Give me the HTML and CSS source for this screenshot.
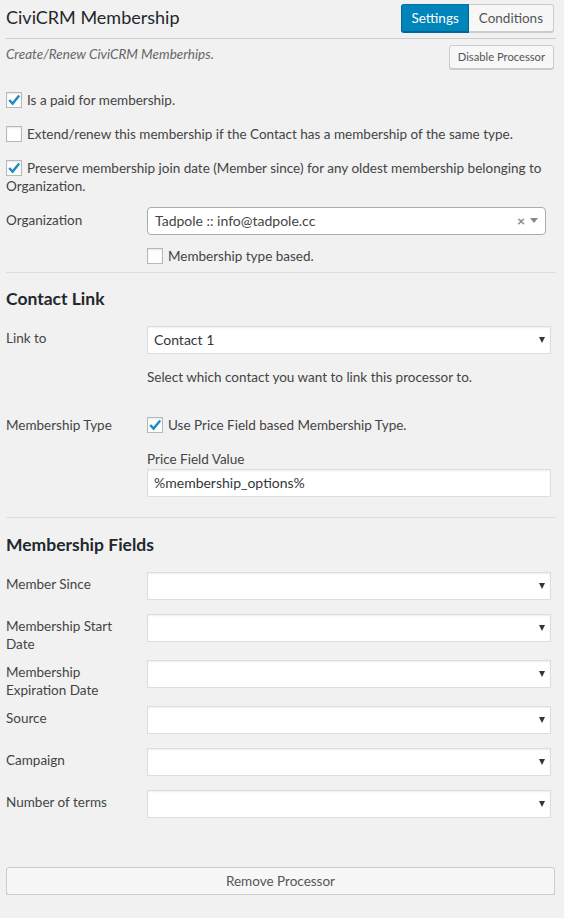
FILE: index.html
```html
<!DOCTYPE html>
<html>
<head>
<meta charset="utf-8">
<link rel="stylesheet" href="styles.css">
</head>
<body>
<div class="panel">
  <div class="head">
    <h2 class="title">CiviCRM Membership</h2>
    <div class="tabs">
      <span class="btn btn-primary">Settings</span><span class="btn">Conditions</span>
    </div>
  </div>
  <div class="descrow">
    <p class="intro">Create/Renew CiviCRM Memberhips.</p>
    <span class="btn btn-small">Disable Processor</span>
  </div>

  <div class="checks">
    <p class="check"><span class="cb"><svg viewBox="0 0 16 16"><polyline points="3.2,8 6.6,11.6 13.2,3.4"/></svg></span>Is a paid for membership.</p>
    <p class="check"><span class="cb"></span>Extend/renew this membership if the Contact has a membership of the same type.</p>
    <p class="check last"><span class="cb"><svg viewBox="0 0 16 16"><polyline points="3.2,8 6.6,11.6 13.2,3.4"/></svg></span>Preserve membership join date (Member since) for any oldest membership belonging to Organization.</p>
  </div>

  <div class="orgrow">
    <label class="orglabel">Organization</label>
    <div class="s2">
      <span class="s2-text">Tadpole :: info@tadpole.cc</span>
      <span class="s2-clear">×</span>
      <span class="s2-arrow"></span>
    </div>
  </div>
  <p class="check sub"><span class="cb"></span>Membership type based.</p>

  <hr class="sep">

  <h3 class="section">Contact Link</h3>
  <div class="field">
    <label class="flabel">Link to</label>
    <div class="fctl">
      <div class="sel"><span class="sel-text">Contact 1</span><span class="sel-arrow"></span></div>
      <p class="desc">Select which contact you want to link this processor to.</p>
    </div>
  </div>
  <div class="field">
    <label class="flabel nopad">Membership Type</label>
    <div class="fctl">
      <p class="check inline"><span class="cb"><svg viewBox="0 0 16 16"><polyline points="3.2,8 6.6,11.6 13.2,3.4"/></svg></span>Use Price Field based Membership Type.</p>
      <label class="toplabel">Price Field Value</label>
      <div class="inp">%membership_options%</div>
    </div>
  </div>

  <hr class="sep sep2">

  <h3 class="section s2h">Membership Fields</h3>
  <div class="field">
    <label class="flabel">Member Since</label>
    <div class="fctl"><div class="sel"><span class="sel-arrow"></span></div></div>
  </div>
  <div class="field">
    <label class="flabel">Membership Start Date</label>
    <div class="fctl"><div class="sel"><span class="sel-arrow"></span></div></div>
  </div>
  <div class="field">
    <label class="flabel">Membership Expiration Date</label>
    <div class="fctl"><div class="sel"><span class="sel-arrow"></span></div></div>
  </div>
  <div class="field">
    <label class="flabel">Source</label>
    <div class="fctl"><div class="sel"><span class="sel-arrow"></span></div></div>
  </div>
  <div class="field">
    <label class="flabel">Campaign</label>
    <div class="fctl"><div class="sel"><span class="sel-arrow"></span></div></div>
  </div>
  <div class="field">
    <label class="flabel">Number of terms</label>
    <div class="fctl"><div class="sel"><span class="sel-arrow"></span></div></div>
  </div>

  <div class="removerow"><span class="btn btn-block">Remove Processor</span></div>
</div>
</body>
</html>
```

FILE: styles.css
```css
html, body {
  margin: 0;
  padding: 0;
  background: #f1f1f1;
}
body {
  font-family: Lato, "Open Sans", sans-serif;
  font-size: 13.5px;
  color: #444;
}
p, h2, h3 { margin: 0; }
.panel {
  padding: 0 8px 0 6px;
}
.head {
  display: flex;
  justify-content: space-between;
  align-items: flex-start;
  box-sizing: border-box;
  height: 39px;
  padding: 4px 2px 0 0;
  border-bottom: 1px solid #ccc;
}
.title {
  font-size: 18px;
  font-weight: 400;
  line-height: 27px;
  color: #23282d;
}
.tabs { display: flex; }
.btn {
  display: inline-block;
  box-sizing: border-box;
  height: 28px;
  line-height: 26px;
  padding: 0 10px;
  font-size: 13.5px;
  color: #555;
  background: #f7f7f7;
  border: 1px solid #ccc;
  box-shadow: 0 1px 0 #ccc;
  border-radius: 3px;
  white-space: nowrap;
}
.tabs .btn { border-radius: 0; }
.tabs .btn:first-child { border-radius: 3px 0 0 3px; }
.tabs .btn:last-child { border-radius: 0 3px 3px 0; border-left: 0; }
.btn-primary {
  padding: 0 9px;
  background: #0085ba;
  border-color: #0073aa #006799 #006799;
  box-shadow: 0 1px 0 #006799;
  color: #fff;
}
.descrow {
  display: flex;
  justify-content: space-between;
  align-items: flex-start;
  padding: 6px 2px 0 0;
}
.intro {
  font-style: italic;
  color: #666;
  line-height: 20px;
  margin-top: -1px;
}
.btn-small {
  height: 24px;
  line-height: 22px;
  padding: 0 8px;
  font-size: 11.2px;
}
.checks { margin-top: 22px; }
.check {
  line-height: 18px;
  margin-bottom: 16px;
}
.check.last { margin-bottom: 12px; }
.cb {
  display: inline-block;
  box-sizing: border-box;
  width: 16px;
  height: 16px;
  margin-right: 5px;
  vertical-align: -3px;
  background: #fff;
  border: 1px solid #b4b9be;
  box-shadow: inset 0 1px 2px rgba(0,0,0,.1);
  position: relative;
}
.cb svg {
  position: absolute;
  left: -1px;
  top: -1px;
  width: 16px;
  height: 16px;
  fill: none;
  stroke: #1e8cbe;
  stroke-width: 2.4;
}
.orgrow {
  display: flex;
  align-items: flex-start;
}
.orglabel {
  width: 141px;
  flex: none;
  padding-top: 4px;
  line-height: 18px;
}
.s2 {
  position: relative;
  box-sizing: border-box;
  width: 399px;
  height: 28px;
  background: #fff;
  border: 1px solid #aaa;
  border-radius: 4px;
}
.s2-text {
  display: block;
  padding-left: 7px;
  line-height: 26px;
  font-size: 14px;
  color: #444;
}
.s2-clear {
  position: absolute;
  right: 20px;
  top: 0;
  line-height: 26px;
  font-size: 14px;
  font-weight: 700;
  color: #888;
}
.s2-arrow {
  position: absolute;
  right: 7px;
  top: 10px;
  width: 0;
  height: 0;
  border-style: solid;
  border-width: 5px 4px 0 4px;
  border-color: #888 transparent transparent transparent;
}
.check.sub {
  margin: 12px 0 0 141px;
}
.sep {
  border: 0;
  border-top: 1px solid #ddd;
  margin: 7px 0 0;
  height: 0;
}
.sep2 { margin-top: 20px; }
.section {
  font-size: 17.5px;
  font-weight: 700;
  line-height: 20px;
  color: #23282d;
  margin-top: 16px;
  margin-bottom: 17px;
}
.section.s2h { margin-top: 17px; margin-bottom: 17px; }
.field {
  display: flex;
  align-items: flex-start;
  padding-right: 5px;
  margin-bottom: 7px;
}
.flabel {
  width: 126px;
  padding-right: 15px;
  flex: none;
  padding-top: 3px;
  line-height: 18px;
  color: #444;
}
.flabel.nopad { padding-top: 0; }
.fctl { flex: 1; min-width: 0; }
.sel {
  position: relative;
  box-sizing: border-box;
  height: 28px;
  margin-bottom: 7px;
  background: #fff;
  border: 1px solid #ddd;
  box-shadow: inset 0 1px 2px rgba(0,0,0,.07);
}
.sel-text {
  display: block;
  padding-left: 6px;
  line-height: 26px;
  font-size: 14px;
  color: #32373c;
}
.sel-arrow {
  position: absolute;
  right: 5px;
  top: 10px;
  width: 0;
  height: 0;
  border-style: solid;
  border-width: 6px 3.5px 0 3.5px;
  border-color: #32373c transparent transparent transparent;
}
.desc {
  margin-top: 14px;
  margin-bottom: 23px;
  line-height: 18px;
}
.check.inline { margin-bottom: 0; }
.toplabel {
  display: block;
  margin-top: 16px;
  line-height: 18px;
}
.inp {
  box-sizing: border-box;
  height: 28px;
  margin-top: 1px;
  padding-left: 6px;
  line-height: 26px;
  font-size: 14px;
  color: #32373c;
  background: #fff;
  border: 1px solid #ddd;
  box-shadow: inset 0 1px 2px rgba(0,0,0,.07);
}
.removerow {
  margin-top: 42px;
  padding-right: 1px;
}
.btn-block {
  display: block;
  text-align: center;
}
```
